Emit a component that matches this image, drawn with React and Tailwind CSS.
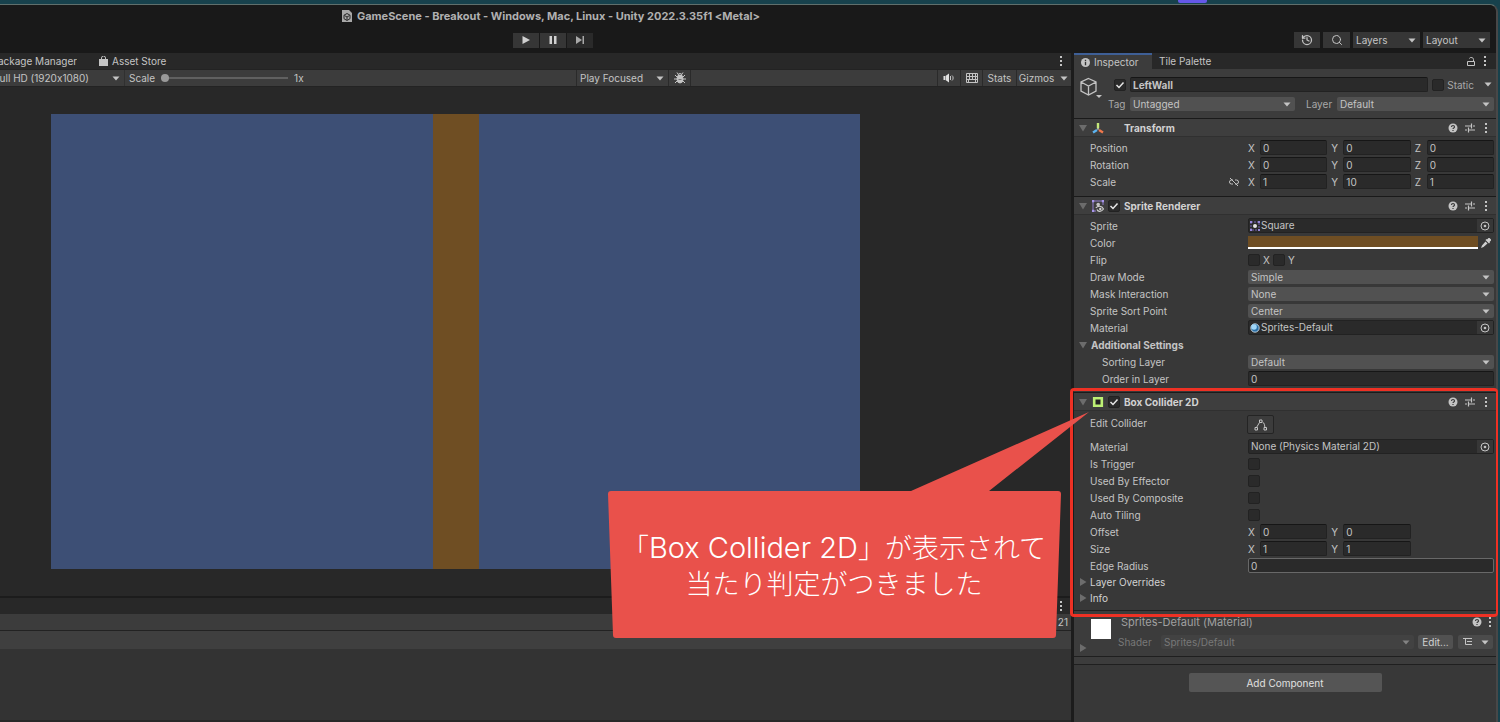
import { useId, useState } from 'react';
import { History, Search } from 'lucide-react';

const Caret = ({ className = '' }) => (
  <svg viewBox="0 0 8 5" className={`h-[5px] w-2 shrink-0 ${className}`} fill="#c4c4c4"><path d="M0.5 0.5h7L4 4.5z" /></svg>
);

const Foldout = ({ open }) => (
  <svg viewBox="0 0 8 8" className="h-2 w-2 shrink-0" fill="#6c6c6c">
    {open ? <path d="M0 1h8L4 7.5z" /> : <path d="M1 0v8l6.500-4z" />}
  </svg>
);

const Kebab = () => (
  <button type="button" aria-label="More options" className="flex h-4 w-2 items-center justify-center">
    <svg viewBox="0 0 4 10" className="h-2.5 w-1" fill="#c4c4c4">
      <rect x="1" y="0" width="2" height="2" /><rect x="1" y="4" width="2" height="2" /><rect x="1" y="8" width="2" height="2" />
    </svg>
  </button>
);

const Help = () => (
  <button type="button" aria-label="Help" className="flex h-4 w-2.5 items-center justify-center">
    <svg viewBox="0 0 10 10" className="h-2.5 w-2.5">
      <circle cx="5" cy="5" r="4.500" fill="#c4c4c4" />
      <path d="M3.500 4c0-2 3-2 3 0 0 1-1.500 1-1.500 2M5 7v1" fill="none" stroke="#383838" strokeWidth="1.200" />
    </svg>
  </button>
);

const Preset = () => (
  <button type="button" aria-label="Presets" className="flex h-4 w-2.5 items-center justify-center">
    <svg viewBox="0 0 10 10" className="h-2.5 w-2.5" fill="none" stroke="#c4c4c4" strokeWidth="1.200">
      <path d="M0 3h6M8 3h2M6.500 0.500v5M0 7h2M4 7h6M3.500 4.500v5" />
    </svg>
  </button>
);

const TransformIcon = () => (
  <svg viewBox="0 0 12 12" className="h-3 w-3" fill="none" strokeWidth="2.400">
    <path d="M6 1v5.500" stroke="#c5e87a" /><path d="M5 8l-4 2.500" stroke="#5db4f0" /><path d="M7 8l4 2.500" stroke="#f0784c" />
    <path d="M6 6v2" stroke="#d8d8d8" strokeWidth="1" />
  </svg>
);

const SpriteRendererIcon = () => (
  <svg viewBox="0 0 12 12" className="h-3 w-3" fill="none">
    <path d="M2 1h8M1 2v8M11 2v3M2 11h2" stroke="#8e7cc9" />
    <path d="M0 0h2.200v2.200H0zM9.800 0H12v2.200H9.800zM0 9.800h2.200V12H0z" fill="#a896ea" />
    <circle cx="6.200" cy="4.600" r="1.800" fill="#c4c4c4" />
    <path d="M3.800 8c2-2.500 6-2.500 7.700 1-2 3-5.500 3-6.500 0.500" stroke="#d0d0d0" strokeWidth="1.200" />
    <circle cx="8.300" cy="9" r="1.200" fill="#d0d0d0" />
  </svg>
);

const ColliderIcon = () => (
  <svg viewBox="0 0 12 12" className="h-3 w-3"><path d="M2.200 2.200h7.600v7.600H2.200z" fill="#222" stroke="#bdf075" strokeWidth="2.600" /></svg>
);

const SquareIcon = () => (
  <svg viewBox="0 0 10 10" className="h-2.5 w-2.5 shrink-0">
    <path d="M1 1h8v8H1z" fill="none" stroke="#7464b4" strokeDasharray="2 1" />
    <path d="M0 0h2v2H0zM8 0h2v2H8zM0 8h2v2H0zM8 8h2v2H8z" fill="#9484d8" />
    <circle cx="5" cy="5" r="2" fill="#e4e4e4" />
  </svg>
);

const MaterialIcon = () => (
  <svg viewBox="0 0 10 10" className="h-2.5 w-2.5 shrink-0">
    <circle cx="5" cy="5" r="4.200" fill="#2b6fa5" stroke="#dce6ec" strokeWidth="0.800" /><circle cx="4" cy="4" r="2.800" fill="#9fd6f8" />
  </svg>
);

function Check({ label, defaultChecked = false, id }) {
  return (
    <span className="relative flex h-3 w-3 shrink-0">
      <input id={id} type="checkbox" aria-label={label} defaultChecked={defaultChecked} className="peer h-3 w-3 appearance-none rounded-xs border border-[#222] bg-[#2a2a2a]" />
      <svg viewBox="0 0 12 12" className="pointer-events-none absolute inset-0 hidden h-3 w-3 peer-checked:block" fill="none" stroke="#e6e6e6" strokeWidth="1.500"><path d="M2.500 6l2.500 2.500 4.500-5" /></svg>
    </span>
  );
}

function Dropdown({ id, label, value, className = 'bg-[#515151]' }) {
  return (
    <span className={`relative flex h-[14px] min-w-0 flex-1 rounded-xs ${className}`}>
      <select id={id} aria-label={label} className="w-full appearance-none pl-[3px] leading-[14px] outline-none"><option>{value}</option></select>
      <Caret className="pointer-events-none absolute top-[5px] right-1" />
    </span>
  );
}

const fieldClass = 'h-[15px] w-full min-w-0 rounded-xs border bg-[#2a2a2a] px-0.5 leading-[13px] outline-none';
const inputClass = `${fieldClass} border-[#222] border-t-[#161616]`;

function Row({ label, htmlFor, indent = false, children }) {
  return (
    <div className="flex h-[17px] items-center pr-0.5 pl-4">
      <label htmlFor={htmlFor} className={`w-[158px] shrink-0 ${indent ? 'pl-3' : ''}`}>{label}</label>
      <div className="flex h-full min-w-0 flex-1 items-center">{children}</div>
    </div>
  );
}

function SelectRow({ label, value, indent }) {
  const id = useId();
  return <Row label={label} htmlFor={id} indent={indent}><Dropdown id={id} value={value} /></Row>;
}

function InputRow({ label, value, indent, focused }) {
  const id = useId();
  return (
    <Row label={label} htmlFor={id} indent={indent}>
      <input id={id} defaultValue={value} className={focused ? `${fieldClass} border-[#686868]` : inputClass} />
    </Row>
  );
}

function CheckRow({ label }) {
  const id = useId();
  return <Row label={label} htmlFor={id}><Check id={id} /></Row>;
}

function VectorRow({ label, values, linked }) {
  const id = useId();
  return (
    <div className="flex h-[17px] items-center pr-0.5 pl-4">
      <div className="flex w-[158px] shrink-0 items-center justify-between pr-2">
        <span>{label}</span>
        {linked && (
          <svg viewBox="0 0 12 10" className="h-2.5 w-3" fill="none" stroke="#c4c4c4">
            <path d="M5 3H3.500a2 2 0 0 0 0 4H5M7 3h1.500a2 2 0 0 1 0 4H7M2 1l8 8" />
          </svg>
        )}
      </div>
      <div className="grid min-w-0 flex-1 grid-cols-3 gap-1">
        {values.map((v, i) => (
          <div key={i} className="flex items-center">
            <label htmlFor={id + i} className="w-3 shrink-0">{'XYZ'[i]}</label>
            <input id={id + i} defaultValue={v} className={inputClass} />
          </div>
        ))}
      </div>
    </div>
  );
}

function ObjectRow({ label, value, icon }) {
  const id = useId();
  return (
    <Row label={label} htmlFor={id}>
      <div className="flex h-[15px] flex-1 items-center rounded-xs border border-[#222] bg-[#2a2a2a] pl-px">
        {icon}
        <input id={id} readOnly defaultValue={value} className="min-w-0 flex-1 pl-px leading-[13px] outline-none" />
        <button type="button" aria-label={`Pick ${label}`} className="flex h-full w-4 items-center justify-center bg-[#373737]">
          <svg viewBox="0 0 10 10" className="h-2.5 w-2.5"><circle cx="5" cy="5" r="4" fill="none" stroke="#c4c4c4" /><circle cx="5" cy="5" r="1.300" fill="#c4c4c4" /></svg>
        </button>
      </div>
    </Row>
  );
}

function ComponentHeader({ title, icon, toggle = true }) {
  return (
    <div className="flex h-[19px] items-center border-t border-b border-t-[#1a1a1a] border-b-[#303030] bg-[#3e3e3e] pr-1.5 pl-[5px]">
      <Foldout open />
      <span className="ml-[5px] w-3">{icon}</span>
      <span className="ml-1 w-4">{toggle && <Check label={`${title} enabled`} defaultChecked />}</span>
      <h2 className="flex-1 font-bold text-[#d2d2d2]">{title}</h2>
      <div className="flex gap-[7px]"><Help /><Preset /><Kebab /></div>
    </div>
  );
}

// Window title, play controls and the global dropdowns
function TopBar() {
  return (
    <header className="h-12 shrink-0 rounded-tr-lg bg-[#191919]">
      <div className="flex h-[22px] items-center justify-center gap-[5px] pr-[394px]">
        <svg viewBox="0 0 10 12" className="h-3 w-2.5">
          <path d="M0 0h7l3 3v9H0z" fill="#a8a8a8" />
          <path d="M5 3.500l3 1.700v3.500L5 10.500 2 8.700V5.200zM5 7v3M5 7L2.500 5.500M5 7l2.500-1.500" fill="none" stroke="#2a2a2a" />
        </svg>
        <h1 className="text-[11px] font-bold text-[#b0b0b0]">GameScene - Breakout - Windows, Mac, Linux - Unity 2022.3.35f1 &lt;Metal&gt;</h1>
      </div>
      <div className="flex h-[26px] items-center justify-between pr-1.5 pl-[513px]">
        <div className="flex gap-px">
          <button type="button" aria-label="Play" className="flex h-[15px] w-[26px] items-center justify-center bg-[#363636]">
            <svg viewBox="0 0 8 10" className="h-2.5 w-2" fill="#d0d0d0"><path d="M0.500 1v8L8 5z" /></svg>
          </button>
          <button type="button" aria-label="Pause" className="flex h-[15px] w-[26px] items-center justify-center bg-[#363636]">
            <svg viewBox="0 0 8 10" className="h-2.5 w-2" fill="#d0d0d0"><path d="M0.500 1H3v8H0.500zM5 1h2.500v8H5z" /></svg>
          </button>
          <button type="button" aria-label="Step" className="flex h-[15px] w-[26px] items-center justify-center bg-[#2a2a2a]">
            <svg viewBox="0 0 9 10" className="h-2.5 w-[9px]" fill="#a8a8a8"><path d="M0 1v8l6-4zM6.500 1H8v8H6.500z" /></svg>
          </button>
        </div>
        <div className="flex gap-[3px]">
          <button type="button" aria-label="Undo history" className="flex h-4 w-[26px] items-center justify-center bg-[#363636]"><History size={12} color="#c4c4c4" strokeWidth={2.5} /></button>
          <button type="button" aria-label="Search" className="flex h-4 w-[27px] items-center justify-center bg-[#363636]"><Search size={12} color="#c4c4c4" /></button>
          <div className="flex w-[67px] bg-[#363636] py-px"><Dropdown label="Layers" value="Layers" className="" /></div>
          <div className="flex w-[67px] bg-[#363636] py-px"><Dropdown label="Layout" value="Layout" className="" /></div>
        </div>
      </div>
    </header>
  );
}

function GameView() {
  const [scale, setScale] = useState(1);
  return (
    <section className="flex flex-col">
      <div className="flex h-4 items-center bg-[#282828]">
        <button type="button" className="flex w-[77px] justify-end overflow-hidden whitespace-nowrap">Package Manager</button>
        <button type="button" className="ml-[22px] flex items-center gap-1">
          <svg viewBox="0 0 9 10" className="h-2.5 w-[9px]"><path d="M0 3h9v7H0z" fill="#c4c4c4" /><path d="M2.500 5V2a2 2 0 0 1 4 0v3" fill="none" stroke="#c4c4c4" /></svg>
          Asset Store
        </button>
        <div className="ml-auto pr-1.5"><Kebab /></div>
      </div>
      <div className="flex h-[18px] items-center border-t border-b border-[#232323] bg-[#3c3c3c]">
        <div className="flex h-full w-[125px] items-center justify-end overflow-hidden border-r border-[#303030]">
          <span className="flex w-[133px] shrink-0"><Dropdown label="Aspect" value="Full HD (1920x1080)" className="" /></span>
        </div>
        <label htmlFor="scale" className="ml-1">Scale</label>
        <input
          id="scale" type="range" min="1" max="5" step="0.1" value={scale} onChange={e => setScale(Number(e.target.value))}
          className="ml-1.5 h-3 w-[127px] appearance-none bg-transparent [&::-webkit-slider-runnable-track]:h-0.5 [&::-webkit-slider-runnable-track]:bg-[#606060] [&::-webkit-slider-thumb]:-mt-[3px] [&::-webkit-slider-thumb]:h-2 [&::-webkit-slider-thumb]:w-2 [&::-webkit-slider-thumb]:appearance-none [&::-webkit-slider-thumb]:rounded-full [&::-webkit-slider-thumb]:bg-[#999]"
        />
        <output htmlFor="scale" className="ml-1.5">{scale}x</output>
        <div className="ml-auto flex h-full w-[93px] items-center border-r border-l border-[#2a2a2a]"><Dropdown label="Play mode" value="Play Focused" className="" /></div>
        <button type="button" aria-label="Debug" className="flex h-full w-[22px] items-center justify-center border-r border-[#2a2a2a]">
          <svg viewBox="0 0 12 12" className="h-3 w-3" stroke="#c4c4c4" fill="none">
            <ellipse cx="6" cy="7" rx="3" ry="4" fill="#c4c4c4" /><path d="M4 3.500a2 2 0 0 1 4 0zM3 5L1 3M9 5l2-2M3 7H0M9 7h3M3 9l-2 2M9 9l2 2M4 2L3 0.500M8 2l1-1.500" />
            <path d="M4.500 7.500h3" stroke="#777" />
          </svg>
        </button>
        <div className="flex h-full w-[380px] items-center justify-end">
          <button type="button" aria-label="Mute audio" className="flex h-full w-[23px] items-center justify-center border-l border-[#2a2a2a]">
            <svg viewBox="0 0 12 10" className="h-2.5 w-3" fill="#e0e0e0"><path d="M0.500 3H2v4H0.500zM2.500 3L6 0.500v9L2.500 7z" /><path d="M7.500 3v4M9 2.500c1.500 1 1.500 4 0 5" fill="none" stroke="#c4c4c4" /></svg>
          </button>
          <button type="button" aria-label="Shortcuts" className="flex h-full w-[22px] items-center justify-center border-l border-[#2a2a2a]">
            <svg viewBox="0 0 12 10" className="h-2.5 w-3" fill="none" stroke="#c4c4c4"><path d="M0.500 0.500h11v9H0.500zM0 3.500h12M0 6.500h12M3.500 0v6M6.500 0v6M9.500 0v6M2.500 7v3M9.500 7v3" /></svg>
          </button>
          <button type="button" className="h-full w-[34px] border-l border-[#2a2a2a]">Stats</button>
          <button type="button" className="h-full w-10 border-l border-[#2a2a2a]">Gizmos</button>
          <button type="button" aria-label="Gizmo options" className="flex h-full w-[15px] items-center justify-center"><Caret /></button>
        </div>
      </div>
      <div className="bg-[#282828] pt-[27px] pr-[211px] pb-[27px] pl-[51px]">
        <div className="flex aspect-video justify-center bg-[#3d4f75]"><div className="w-[46px] bg-[#6f4e23]" /></div>
      </div>
    </section>
  );
}

function Console() {
  return (
    <section className="flex flex-1 flex-col border-t-2 border-b-2 border-t-[#1c1c1c] border-b-[#282828] bg-[#333]">
      <div className="flex h-4 items-center justify-end bg-[#282828] pr-1.5"><Kebab /></div>
      <div className="flex h-[17px] items-center justify-end border-b border-[#222] bg-[#3c3c3c] pr-[3px]">21</div>
      <div className="h-[18px] bg-[#3f3f3f]" />
    </section>
  );
}

function ObjectHeader() {
  return (
    <div className="flex h-[49px] gap-1 bg-[#3c3c3c] pt-2 pr-0.5 pl-1.5">
      <button type="button" aria-label="Select icon" className="relative h-[22px] w-[22px] shrink-0">
        <svg viewBox="0 0 22 22" className="h-[22px] w-[22px]" fill="none" stroke="#c4c4c4" strokeWidth="1.300">
          <path d="M8.500 1.500L16 5v9l-7.500 4L1 14V5zM1 5l7.500 4L16 5M8.500 9v9" /><path d="M16 18h6l-3 3z" fill="#c4c4c4" stroke="none" />
        </svg>
      </button>
      <div className="flex min-w-0 flex-1 flex-col gap-1">
        <div className="flex h-[15px] items-center pl-2">
          <Check label="Active" defaultChecked />
          <input aria-label="Name" defaultValue="LeftWall" className={`${inputClass} ml-1 flex-1 font-bold`} />
          <span className="ml-1"><Check id="static" /></span>
          <label htmlFor="static" className="ml-[3px] text-[#a8a8a8]">Static</label>
          <button type="button" aria-label="Static flags" className="ml-2 flex w-3 justify-center"><Caret /></button>
        </div>
        <div className="flex h-[15px] items-center pl-0.5">
          <label htmlFor="tag" className="w-[22px] text-[#a8a8a8]">Tag</label>
          <Dropdown id="tag" value="Untagged" />
          <label htmlFor="layer" className="ml-[11px] w-[31px] text-[#a8a8a8]">Layer</label>
          <span className="flex w-[157px]"><Dropdown id="layer" value="Default" /></span>
        </div>
      </div>
    </div>
  );
}

// Speech bubble that points at the highlighted component
function Callout() {
  return (
    <div className="pointer-events-none absolute top-5 -left-[466px] z-20 h-[227px] w-[482px]">
      <svg viewBox="0 0 482 227" className="absolute inset-0 h-full w-full" fill="#e9514b">
        <path d="M303 79L481 0L381 79H450Q453 79 453 82L448 223Q448 226 445 226H8Q5 226 5 223L0 82Q0 79 3 79Z" />
      </svg>
      <p className="relative pt-[118px] pr-[30px] text-center font-['Inter','Noto_Sans_CJK_JP',sans-serif] text-[27px] leading-9 font-light whitespace-nowrap text-white">
        「<span className="text-[29px]">Box Collider 2D</span>」が表示されて<br />当たり判定がつきました
      </p>
    </div>
  );
}

function Inspector() {
  return (
    <aside className="flex w-[425px] shrink-0 flex-col border-l-3 border-[#1c1c1c] bg-[#383838]">
      <div className="flex h-4 items-center bg-[#282828]">
        <button type="button" className="flex h-4 w-[78px] items-center gap-1 border-t-2 border-[#3e5f96] bg-[#3c3c3c] pl-[7px]">
          <svg viewBox="0 0 10 10" className="h-[9px] w-[9px]"><circle cx="5" cy="5" r="5" fill="#c4c4c4" /><path d="M5 2v1.500M5 4.500V8" stroke="#333" strokeWidth="1.500" /></svg>
          Inspector
        </button>
        <button type="button" className="ml-[7px]">Tile Palette</button>
        <div className="ml-auto flex items-center gap-1.5 pr-[7px]">
          <button type="button" aria-label="Lock">
            <svg viewBox="0 0 8 9" className="h-[9px] w-2" fill="none" stroke="#c4c4c4"><path d="M0.500 4.500h7v4h-7zM6.500 4.500V2.500c0-2.500-4-2.500-4-1" /></svg>
          </button>
          <Kebab />
        </div>
      </div>

      <ObjectHeader />

      <section>
        <ComponentHeader title="Transform" icon={<TransformIcon />} toggle={false} />
        <div className="pt-0.5 pb-1.5">
          <VectorRow label="Position" values={[0, 0, 0]} />
          <VectorRow label="Rotation" values={[0, 0, 0]} />
          <VectorRow label="Scale" values={[1, 10, 1]} linked />
        </div>
      </section>

      <section>
        <ComponentHeader title="Sprite Renderer" icon={<SpriteRendererIcon />} />
        <div className="pt-0.5 pb-[5px]">
          <ObjectRow label="Sprite" value="Square" icon={<SquareIcon />} />
          <Row label="Color" htmlFor="color">
            <input id="color" type="color" defaultValue="#6f4e23" className="h-[13px] min-w-0 flex-1 appearance-none border-b-2 border-white [&::-webkit-color-swatch]:rounded-none [&::-webkit-color-swatch]:border-0 [&::-webkit-color-swatch-wrapper]:p-0" />
            <button type="button" aria-label="Pick color" className="flex h-[15px] w-4 items-center justify-center">
              <svg viewBox="0 0 10 10" className="h-2.5 w-2.5" fill="#d0d0d0"><path d="M6 1.500L7.500 0h1L10 1.500v1L8.500 4l.500.500-1 1L4.500 2l1-1zM4.500 3.500l2 2L2.500 9 0 10l1-2.500z" /></svg>
            </button>
          </Row>
          <div className="flex h-[17px] items-center pl-4">
            <span className="w-[158px]">Flip</span>
            <Check id="flip-x" /><label htmlFor="flip-x" className="w-[13px] pl-[3px]">X</label>
            <Check id="flip-y" /><label htmlFor="flip-y" className="pl-[3px]">Y</label>
          </div>
          <SelectRow label="Draw Mode" value="Simple" />
          <SelectRow label="Mask Interaction" value="None" />
          <SelectRow label="Sprite Sort Point" value="Center" />
          <ObjectRow label="Material" value="Sprites-Default" icon={<MaterialIcon />} />
          <button type="button" className="flex h-[17px] items-center gap-1 pl-[5px] font-bold"><Foldout open />Additional Settings</button>
          <SelectRow label="Sorting Layer" value="Default" indent />
          <InputRow label="Order in Layer" value="0" indent />
        </div>
      </section>

      <section className="relative">
        <ComponentHeader title="Box Collider 2D" icon={<ColliderIcon />} />
        <div className="pt-1 pb-1">
          <div className="flex h-[23px] pl-4">
            <label htmlFor="edit-collider" className="w-[157px]">Edit Collider</label>
            <button id="edit-collider" type="button" aria-label="Edit Collider" className="flex h-[19px] w-[27px] items-center justify-center rounded-xs border border-[#242424] bg-[#3c3c3c]">
              <svg viewBox="0 0 14 12" className="h-3 w-3.5" fill="none" stroke="#c4c4c4"><path d="M2.500 8.500L5.500 3.500M8.500 3c2 1 2 3 2.500 6M1 8.500h2.500v2.500H1zM10 8.500h2.500v2.500H10zM5.500 1H8v2.500H5.500z" /></svg>
            </button>
          </div>
          <ObjectRow label="Material" value="None (Physics Material 2D)" />
          <CheckRow label="Is Trigger" />
          <CheckRow label="Used By Effector" />
          <CheckRow label="Used By Composite" />
          <CheckRow label="Auto Tiling" />
          <VectorRow label="Offset" values={[0, 0]} />
          <VectorRow label="Size" values={[1, 1]} />
          <InputRow label="Edge Radius" value="0" focused />
          <button type="button" className="flex h-4 items-center gap-[3px] pl-[5px] text-[#d2d2d2]"><Foldout />Layer Overrides</button>
          <button type="button" className="flex h-4 items-center gap-[3px] pl-[5px] text-[#d2d2d2]"><Foldout />Info</button>
        </div>
        <div className="pointer-events-none absolute -top-1 right-[-2px] -bottom-[7px] -left-1 z-10 rounded-sm border-[3px] border-r-2 border-[#ee3124]" />
        <Callout />
      </section>

      <section className="flex h-[47px] border-t border-b border-[#1f1f1f] bg-[#3c3c3c] pr-0.5 pl-[5px]">
        <button type="button" aria-label="Expand material" className="flex items-end pb-1"><Foldout /></button>
        <div className="mt-2 ml-1 h-5 w-5 shrink-0 bg-white" />
        <div className="ml-[7px] min-w-0 flex-1 pt-[3px]">
          <div className="flex h-4 items-center">
            <h2 className="flex-1 pl-[3px] text-[11px] text-[#a0a0a0]">Sprites-Default (Material)</h2>
            <div className="flex gap-1"><Help /><Kebab /></div>
          </div>
          <div className="flex h-6 items-center pr-px text-[#787878]">
            <label htmlFor="shader" className="w-[43px]">Shader</label>
            <Dropdown id="shader" value="Sprites/Default" className="bg-[#424242] [&>svg]:opacity-50" />
            <button type="button" className="ml-1 h-[14px] w-[35px] rounded-xs bg-[#515151] leading-[14px] text-[#d2d2d2]">Edit...</button>
            <button type="button" aria-label="Shader list" className="ml-[5px] flex h-[14px] w-[35px] items-center justify-center gap-2 rounded-xs bg-[#4b4b4b]">
              <svg viewBox="0 0 10 8" className="h-2 w-2.5" fill="none" stroke="#c4c4c4"><path d="M0 0.500h9M4 3.500h5M4 6.500h5M2.500 1v5.500h1.500" /></svg>
              <Caret />
            </button>
          </div>
        </div>
      </section>
      <div className="h-2 border-b border-[#1f1f1f] bg-[#3c3c3c]" />
      <button type="button" className="mx-auto mt-2 h-[19px] w-[193px] rounded-xs bg-[#555] text-[#e0e0e0]">Add Component</button>
    </aside>
  );
}

export default function App() {
  return (
    <div className="flex min-h-screen flex-col overflow-hidden bg-[#17414c] font-['Inter',sans-serif] text-[10px] leading-4 text-[#c4c4c4] [font-feature-settings:'calt'_0]">
      <div className="flex h-1 shrink-0 pl-[1178px]"><div className="h-[3px] w-[29px] rounded-b-xs bg-[#6558e8]" /></div>
      <div className="mr-0.5 flex flex-1 flex-col rounded-tr-lg border-t border-r-2 border-t-[#5f6f6c] border-r-[#484848] bg-[#191919]">
        <TopBar />
        <div className="flex flex-1">
          <main className="flex min-w-0 flex-1 flex-col"><GameView /><Console /></main>
          <Inspector />
        </div>
      </div>
    </div>
  );
}
